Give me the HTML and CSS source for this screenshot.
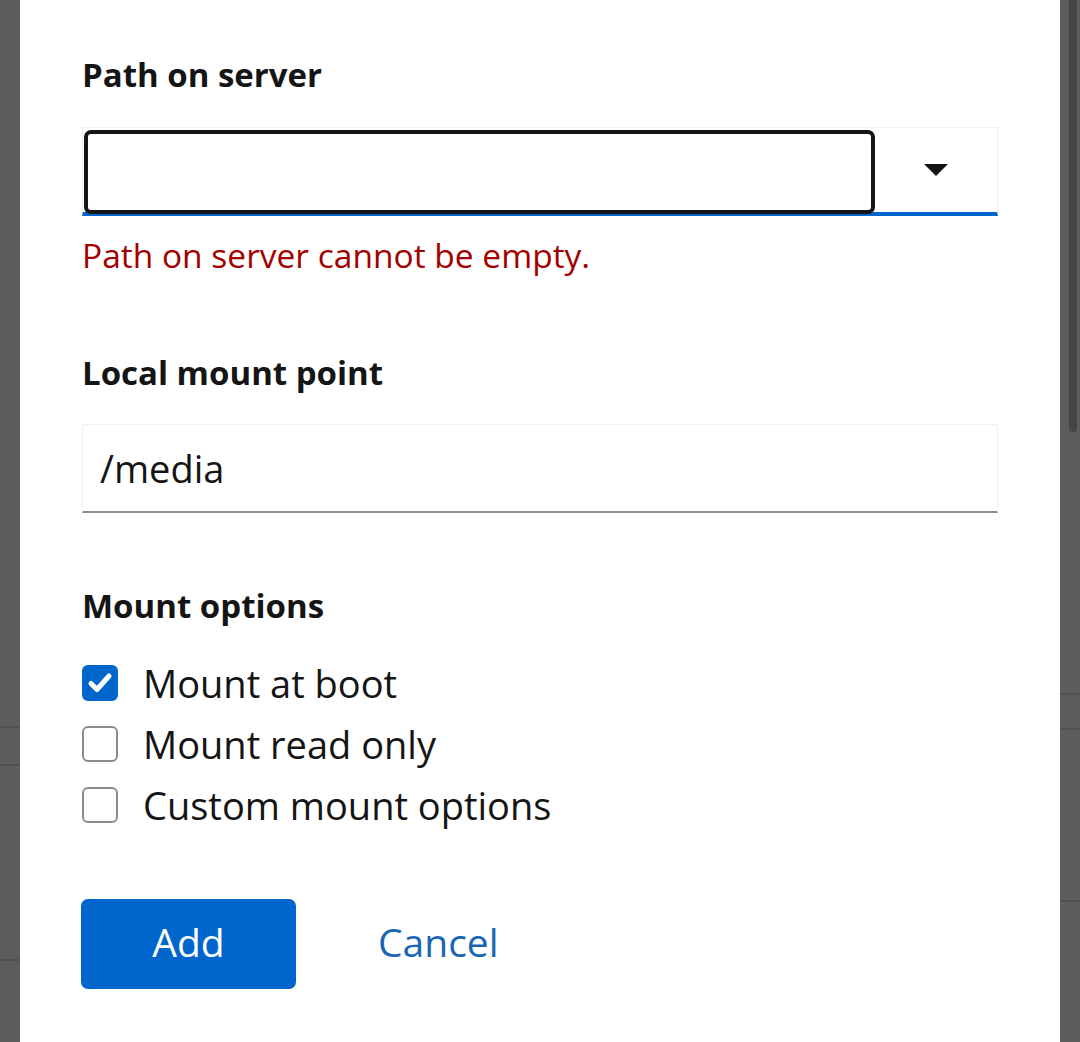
FILE: index.html
```html
<!DOCTYPE html>
<html lang="en">
  <head>
    <meta charset="UTF-8" />
    <meta name="viewport" content="width=device-width, initial-scale=1.0" />
    <title>Add NFS mount</title>
    <link rel="stylesheet" href="styles.css">
  </head>
  <body>
    <div class="backdrop">
      <div class="bg-line left" style="top: 726px"></div>
      <div class="bg-line left" style="top: 764px"></div>
      <div class="bg-line left" style="top: 959px"></div>
      <div class="bg-line right" style="top: 693px"></div>
      <div class="bg-line right" style="top: 728px"></div>
      <div class="bg-line right" style="top: 900px"></div>
      <div class="scrollbar"></div>

      <div class="modal">
        <form class="form">
          <label class="form-label" for="serverPath">Path on server</label>
          <div class="select">
            <input class="select-input" id="serverPath" type="text" />
            <button class="select-toggle" type="button">
              <svg width="24" height="12" viewBox="0 0 24 12">
                <path d="M0 0h24L12 12z" fill="#151515"/>
              </svg>
            </button>
          </div>
          <div class="form-error">Path on server cannot be empty.</div>

          <label class="form-label spaced" for="mountPoint">Local mount point</label>
          <input class="text-input" id="mountPoint" type="text" value="/media" />

          <div class="form-label spaced">Mount options</div>
          <div class="check-list">
            <label class="check">
              <span class="check-box checked">
                <svg width="26" height="22" viewBox="0 0 26 22">
                  <path d="M4 11.5l6 6L22 4" fill="none" stroke="#fff" stroke-width="5" stroke-linecap="round" stroke-linejoin="round"/>
                </svg>
              </span>
              Mount at boot
            </label>
            <label class="check">
              <span class="check-box"></span>
              Mount read only
            </label>
            <label class="check">
              <span class="check-box"></span>
              Custom mount options
            </label>
          </div>

          <div class="actions">
            <button class="btn-primary" type="button">Add</button>
            <button class="btn-link" type="button">Cancel</button>
          </div>
        </form>
      </div>
    </div>
  </body>
</html>
```

FILE: styles.css
```css
body {
  margin: 0;
  background-color: #5c5c5c;
  font-family: "Open Sans", "Liberation Sans", sans-serif;
  color: #151515;
}
.backdrop {
  position: relative;
  height: 1042px;
  overflow: hidden;
}
.bg-line {
  position: absolute;
  height: 2px;
  width: 20px;
  background-color: #505050;
}
.bg-line.left {
  left: 0;
}
.bg-line.right {
  right: 0;
}
.scrollbar {
  position: absolute;
  top: 0;
  right: 3px;
  width: 8px;
  height: 432px;
  border-radius: 0 0 4px 4px;
  background-color: #464646;
}
.modal {
  position: relative;
  margin: 0 20px;
  height: 1042px;
  background-color: #fff;
  padding: 51px 62px 0;
  box-sizing: border-box;
}
.form {
  display: flex;
  flex-direction: column;
}
.form-label {
  font-size: 33px;
  font-weight: 700;
  line-height: 48px;
}
.form-label.spaced {
  margin-top: 70px;
}
.select {
  display: flex;
  height: 89px;
  margin-top: 28px;
  border: 1px solid #f0f0f0;
  border-bottom: 4px solid #0066cc;
  box-sizing: border-box;
}
.select-input {
  flex: 1;
  height: 84px;
  margin: 2px 0 0 1px;
  border: 4px solid #151515;
  border-radius: 7px;
  box-sizing: border-box;
  outline: none;
  font: inherit;
  font-size: 38px;
}
.select-toggle {
  width: 122px;
  border: none;
  background-color: #fff;
  display: flex;
  align-items: center;
  justify-content: center;
  padding: 0;
}
.form-error {
  margin-top: 15px;
  font-size: 33.5px;
  line-height: 48px;
  color: #a30000;
}
.text-input {
  height: 89px;
  margin-top: 27px;
  padding: 0 17px;
  border: 1px solid #f0f0f0;
  border-bottom: 2px solid #8a8d90;
  box-sizing: border-box;
  font: inherit;
  font-size: 38px;
  color: #151515;
  outline: none;
}
.text-input + .form-label.spaced {
  margin-top: 69px;
}
.check-list {
  display: flex;
  flex-direction: column;
  gap: 13px;
  margin-top: 29px;
}
.check {
  display: flex;
  align-items: center;
  gap: 25px;
  font-size: 38px;
  line-height: 48px;
}
.check-box {
  width: 36px;
  height: 36px;
  border: 2px solid #8a8d90;
  border-radius: 6px;
  box-sizing: border-box;
  display: flex;
  align-items: center;
  justify-content: center;
}
.check-box.checked {
  border-color: #0066cc;
  background-color: #0066cc;
}
.actions {
  display: flex;
  align-items: center;
  gap: 82px;
  margin-top: 70px;
}
.btn-primary {
  width: 215px;
  height: 90px;
  margin-left: -1px;
  padding: 0 0 5px;
  border: none;
  border-radius: 7px;
  background-color: #0066cc;
  color: #fff;
  font: inherit;
  font-size: 39px;
}
.btn-link {
  border: none;
  background: none;
  padding: 0 0 5px;
  font: inherit;
  font-size: 39px;
  color: #1a66b3;
}
```
